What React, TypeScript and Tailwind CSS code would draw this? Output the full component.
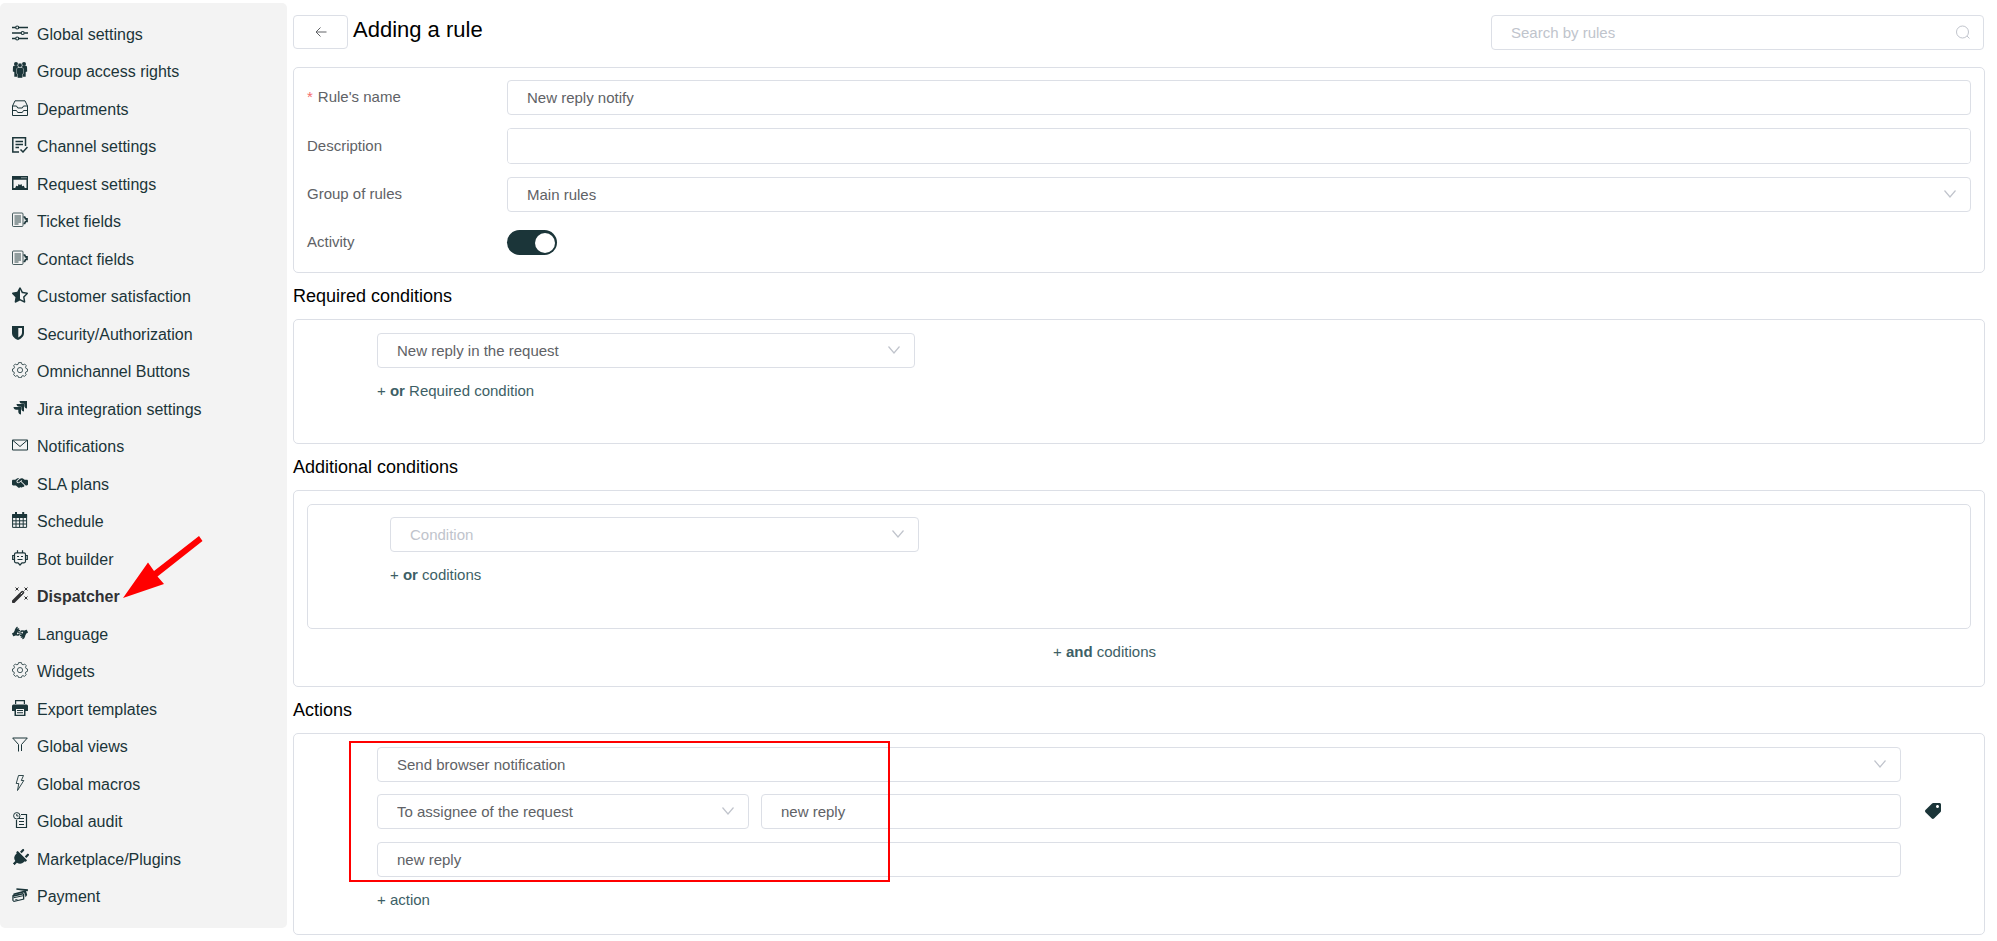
import { useState } from 'react';
import type { ReactNode } from 'react';
import { FaAmericanSignLanguageInterpreting, FaPlug, FaStarHalfAlt, FaTag } from 'react-icons/fa';
import { FaHandshakeSimple } from 'react-icons/fa6';

interface NavItem {
    label: string;
    icon: ReactNode;
}

interface SvgIconProps {
    children: ReactNode;
    filled?: boolean;
}

function SvgIcon({ children, filled = false }: SvgIconProps) {
    return (
        <svg
            viewBox="0 0 16 16"
            className="size-4"
            fill={filled ? 'currentColor' : 'none'}
            stroke={filled ? 'none' : 'currentColor'}
            strokeWidth="1"
            aria-hidden="true"
        >
            {children}
        </svg>
    );
}

const gearIcon = (
    <SvgIcon>
        <path d="M6.6.6h2.8l.5 1.7 1.2.5 1.6-.8 1.6 1.7-.8 1.5.5 1.3 1.5.5v2.3l-1.6.6-.5 1.2.8 1.6-1.7 1.7-1.5-.8-1.2.5-.5 1.6H6.700l-.6-1.6-1.2-.5-1.5.8-1.8-1.7.8-1.6-.5-1.2-1.4-.6V7l1.5-.5.5-1.3-.8-1.5L3.300 2l1.6.8 1.2-.5z" strokeWidth="0.8" />
        <circle cx="8" cy="8.1" r="2.6" strokeWidth="0.8" />
    </SvgIcon>
);

const fieldsIcon = (
    <SvgIcon>
        <rect x="0.5" y="1" width="10.5" height="13.5" rx="1" strokeWidth="0.8" />
        <path d="M2.5 4H9M2.5 6H9M2.5 8H9M2.5 10H9M2.5 12h4" strokeWidth="0.9" />
        <path d="M11.5 5h1.2l.8 1.800H15v2.700h-1.500l-.8 2h-1.200" strokeWidth="1.700" />
    </SvgIcon>
);

const navItems: NavItem[] = [
    {
        label: 'Global settings',
        icon: (
            <SvgIcon>
                <path d="M0 2.500h3.600M6.800 2.500H16M0 8h9.100M12.300 8H16M0 13.500h3.600M6.800 13.500H16" strokeWidth="1.300" />
                <circle cx="5.200" cy="2.500" r="1.500" strokeWidth="1.200" />
                <circle cx="10.700" cy="8" r="1.500" strokeWidth="1.200" />
                <circle cx="5.200" cy="13.500" r="1.500" strokeWidth="1.200" />
            </SvgIcon>
        ),
    },
    {
        label: 'Group access rights',
        icon: (
            <SvgIcon filled>
                <circle cx="4" cy="2" r="2" />
                <circle cx="12" cy="2" r="2" />
                <path d="M2 3.800h4v11H2.300V10L.8 9.500l.2-5zM14 3.800h-4v11h3.700V10l1.500-.5-.2-5z" />
                <circle cx="8" cy="3.300" r="2.200" stroke="#f3f3f3" strokeWidth="0.500" />
                <path d="M6 5.500h4l1.500 1.200v4.800l-1 .5V16h-5v-4l-1-.5V6.700z" stroke="#f3f3f3" strokeWidth="0.400" />
            </SvgIcon>
        ),
    },
    {
        label: 'Departments',
        icon: (
            <SvgIcon>
                <path d="M.5 6 3 .8h10L15.500 6v9.500H.5zM.5 6h4l1.200 2h4.600l1.200-2h4M.5 10.500h4l1.200 2h4.600l1.200-2h4" />
            </SvgIcon>
        ),
    },
    {
        label: 'Channel settings',
        icon: (
            <SvgIcon>
                <path d="M7 15H.8V.8h12.700V9M3.500 4.500h7.500M3.500 7.500h7.500M3.500 10.500H7M8.500 12.500 11 15l4.500-5" strokeWidth="1.500" />
            </SvgIcon>
        ),
    },
    {
        label: 'Request settings',
        icon: (
            <SvgIcon filled>
                <path fillRule="evenodd" d="M0 1h16v14H0zM1.500 4.800V13h1.700l1-2.200 1.700.4L6.500 9l1.500.9L9.500 9l.6 2.200 1.700-.4 1 2.200h1.700V4.800z" />
                <path d="M9.500 2.300h1v1h-1zM11.500 2.300h1v1h-1zM13.500 2.300h1v1h-1z" fill="#f3f3f3" />
            </SvgIcon>
        ),
    },
    { label: 'Ticket fields', icon: fieldsIcon },
    { label: 'Contact fields', icon: fieldsIcon },
    { label: 'Customer satisfaction', icon: <FaStarHalfAlt className="size-4" /> },
    {
        label: 'Security/Authorization',
        icon: (
            <SvgIcon filled>
                <path fillRule="evenodd" d="M0 1h12v7c0 3.500-3 5.800-6 7-3-1.200-6-3.500-6-7zM6.300 3v9.500c2-1.200 3.700-2.500 3.700-4.700V3z" />
            </SvgIcon>
        ),
    },
    { label: 'Omnichannel Buttons', icon: gearIcon },
    {
        label: 'Jira integration settings',
        icon: (
            <SvgIcon filled>
                <path d="M7.500 1H15v7.500c-1.500 0-2.700-1.200-2.700-2.700V3.700h-2C8.700 3.700 7.500 2.500 7.500 1z" />
                <path d="M4.500 4H12v7.500c-1.500 0-2.700-1.200-2.700-2.700V6.700h-2C5.700 6.700 4.500 5.500 4.500 4z" />
                <path d="M1.500 7H9v7.500c-1.500 0-2.700-1.200-2.700-2.700V9.700h-2C2.700 9.700 1.500 8.500 1.500 7z" />
            </SvgIcon>
        ),
    },
    {
        label: 'Notifications',
        icon: (
            <SvgIcon>
                <path d="M.5 3h15v10H.5zM.8 3.300 8 9.500l7.200-6.200" />
            </SvgIcon>
        ),
    },
    { label: 'SLA plans', icon: <FaHandshakeSimple className="size-4" /> },
    {
        label: 'Schedule',
        icon: (
            <SvgIcon>
                <path d="M.6 5.500h14M.6 8.800h14M.6 12h14M4 5v10M7.600 5v10M11.200 5v10M.6 3v12.400h14V3" />
                <path d="M.1 2h15v3.500H.1z" fill="currentColor" stroke="none" />
                <path d="M4 0v4M11.200 0v4" strokeWidth="2" />
            </SvgIcon>
        ),
    },
    {
        label: 'Bot builder',
        icon: (
            <SvgIcon>
                <path d="M4 2.800h8q1.500 0 1.500 1.500v7q0 1.500-1.500 1.500h-2L8 15l-2-2.200H4q-1.500 0-1.500-1.500v-7q0-1.500 1.500-1.500zM5.500 2.500V.3M10.500 2.500V.3M2.300 5.500H.7v4h1.600M13.700 5.500h1.600v4h-1.600M5 6.500h2M9 6.500h2M5.500 9.500h5" strokeWidth="1.200" />
            </SvgIcon>
        ),
    },
    {
        label: 'Dispatcher',
        icon: (
            <SvgIcon>
                <path d="M1.500 14.500 10.500 5.500" strokeWidth="3.400" strokeLinecap="round" />
                <path d="m8.800 7.200 1.700-1.700" stroke="#f3f3f3" />
                <path d="m3.500.5 3 3M6.500.5l-3 3M12.500.5l3 3M15.500.5l-3 3M12.500 9.500l3 3M15.500 9.500l-3 3" />
            </SvgIcon>
        ),
    },
    { label: 'Language', icon: <FaAmericanSignLanguageInterpreting className="size-4" /> },
    { label: 'Widgets', icon: gearIcon },
    {
        label: 'Export templates',
        icon: (
            <SvgIcon filled>
                <path fillRule="evenodd" d="M3 0h10v4H3zM4.200 1.200V4h7.600V1.200zM1.500 4.500h13Q16 4.500 16 6v5h-2.500v5h-11v-5H0V6q0-1.500 1.500-1.500zM4 9v5.700h8V9z" />
                <path d="M5 10h6v1H5zM5 12.300h6v1H5z" />
            </SvgIcon>
        ),
    },
    {
        label: 'Global views',
        icon: (
            <SvgIcon>
                <path d="M6.500 14.500v-7L.7 1h14.600L9.500 7.500V14" />
            </SvgIcon>
        ),
    },
    {
        label: 'Global macros',
        icon: (
            <SvgIcon>
                <path d="M6.500.5h5l-2.200 5h2.500l-6.300 10 1.300-7H4.200z" strokeWidth="0.9" />
            </SvgIcon>
        ),
    },
    {
        label: 'Global audit',
        icon: (
            <SvgIcon>
                <path d="M9 2.500h5.500v13H4.500V8M7 6.500h5M7 9.500h5M7 12.500h5" strokeWidth="1.200" />
                <circle cx="4.800" cy="3.800" r="3.200" />
                <path d="M4.800 2v2h1.700" />
            </SvgIcon>
        ),
    },
    { label: 'Marketplace/Plugins', icon: <FaPlug className="size-[18px] shrink-0 rotate-45" /> },
    {
        label: 'Payment',
        icon: (
            <SvgIcon filled>
                <path d="M4.500 1.200 16 2.200l-.2 2L4.300 2.800z" />
                <path d="m1.500 6.500 11-3 1.500.3 1.200 4.200-1.700 2.200-.6-3L12 5.500 1.200 8.300z" />
                <path fillRule="evenodd" d="M.3 8.300 10.800 6l1.500 1v5.500L1.800 15 .3 13.500zM1.500 9.800v3.700l.8.300 8.700-2.100V7.500z" />
                <path d="m1.500 10.300 9.500-2v1l-9.500 2zM3 12.500l2.500-.5v.8l-2.500.5z" />
            </SvgIcon>
        ),
    },
];

const controlClass =
    'block h-[35px] w-full rounded border border-[#dcdfe6] bg-white px-[19px] text-[15px] text-[#606266] outline-none placeholder:text-[#c0c4cc] focus:border-[#1b3539]';

interface SelectBoxProps {
    id?: string;
    label?: string;
    options: string[];
    placeholder?: string;
}

function SelectBox({ id, label, options, placeholder }: SelectBoxProps) {
    const [value, setValue] = useState(placeholder ? '' : options[0]);

    return (
        <div className="relative">
            <select
                id={id}
                aria-label={label}
                value={value}
                onChange={(e) => setValue(e.target.value)}
                className={`${controlClass} appearance-none pt-0.5 ${value === '' ? 'text-[#c0c4cc]' : ''}`}
            >
                {placeholder && <option value="">{placeholder}</option>}
                {options.map((option) => (
                    <option key={option} value={option}>
                        {option}
                    </option>
                ))}
            </select>
            <svg
                viewBox="0 0 14 8"
                className="pointer-events-none absolute top-[13px] right-[14px] h-2 w-[14px] text-[#c0c4cc]"
                fill="none"
                stroke="currentColor"
                strokeWidth="1.2"
                aria-hidden="true"
            >
                <path d="m1.500.5 5.500 6.500L12.500.5" />
            </svg>
        </div>
    );
}

function AddButton({ children }: { children: ReactNode }) {
    return (
        <button type="button" className="block cursor-pointer text-[15px] leading-[23px] text-[#3d5f66]">
            {children}
        </button>
    );
}

function Panel({ className = '', children }: { className?: string; children: ReactNode }) {
    return <div className={`rounded-[5px] border border-[#dcdfe6] ${className}`}>{children}</div>;
}

function SectionTitle({ children }: { children: ReactNode }) {
    return <h2 className="text-lg leading-[46px] text-black">{children}</h2>;
}

function Sidebar() {
    return (
        <nav className="mt-[3px] mb-[13px] flex w-[287px] shrink-0 rounded-[5px] bg-[#f3f3f3] pt-[13px] pb-3">
            <ul className="flex flex-1 flex-col">
                {navItems.map((item) => {
                    const active = item.label === 'Dispatcher';
                    return (
                        <li key={item.label} className="relative flex flex-1 items-center">
                            <a
                                href="#"
                                className={`flex items-center gap-[9px] pl-3 text-base leading-6 ${active ? 'font-bold text-[#303133]' : 'text-[#1b3539]'}`}
                            >
                                <span className="mb-1 flex size-4 items-center justify-center">{item.icon}</span>
                                {item.label}
                            </a>
                            {active && (
                                <svg
                                    viewBox="0 0 80 64"
                                    className="pointer-events-none absolute bottom-[17px] left-[123px] h-16 w-20"
                                    fill="#ff0000"
                                    aria-hidden="true"
                                >
                                    <path d="M0 63 25 27.500l6 8.500L76 1l3.500 5L34.500 41.500l6.500 7.500z" />
                                </svg>
                            )}
                        </li>
                    );
                })}
            </ul>
        </nav>
    );
}

export default function App() {
    const [ruleName, setRuleName] = useState('New reply notify');
    const [description, setDescription] = useState('');
    const [isActive, setIsActive] = useState(true);
    const [title, setTitle] = useState('new reply');
    const [message, setMessage] = useState('new reply');

    return (
        <div className="flex bg-white font-['Liberation_Sans',Arial,sans-serif]">
            <Sidebar />

            <main className="min-w-0 flex-1 pt-[15px] pr-3 pb-1.5 pl-1.5">
                {/* Header */}
                <header className="flex items-start justify-between">
                    <div className="flex items-start gap-[5px]">
                        <button
                            type="button"
                            aria-label="Back"
                            className="flex h-[34px] w-[55px] items-center justify-center rounded border border-[#dcdfe6] text-[#606266]"
                        >
                            <svg viewBox="0 0 12 12" className="size-3" fill="none" stroke="currentColor" aria-hidden="true">
                                <path d="M11.500 6H1M5.500 1.500 1 6l4.500 4.500" />
                            </svg>
                        </button>
                        <h1 className="text-[22px] leading-[30px] text-black">Adding a rule</h1>
                    </div>
                    <div className="relative w-[494px] pr-px">
                        <input type="search" aria-label="Search by rules" placeholder="Search by rules" className={controlClass} />
                        <svg
                            viewBox="0 0 14 14"
                            className="absolute top-[10px] right-[15px] size-[14px] text-[#c0c4cc]"
                            fill="none"
                            stroke="currentColor"
                            aria-hidden="true"
                        >
                            <circle cx="6.500" cy="7" r="6" />
                            <path d="m11 11 2.500 2.500" />
                        </svg>
                    </div>
                </header>

                {/* Rule details */}
                <Panel className="mt-[17px] flex flex-col gap-[13px] px-[13px] py-3">
                    <div className="flex items-center">
                        <label htmlFor="rule-name" className="w-[200px] shrink-0 text-[15px] text-[#606266]">
                            <span className="mr-[5px] text-[#f56c6c]">*</span>
                            Rule's name
                        </label>
                        <input
                            id="rule-name"
                            type="text"
                            required
                            value={ruleName}
                            onChange={(e) => setRuleName(e.target.value)}
                            className={controlClass}
                        />
                    </div>
                    <div className="flex h-9 items-center">
                        <label htmlFor="description" className="w-[200px] shrink-0 text-[15px] text-[#606266]">
                            Description
                        </label>
                        <textarea
                            id="description"
                            rows={1}
                            value={description}
                            onChange={(e) => setDescription(e.target.value)}
                            className="block h-9 w-full resize-none rounded border border-[#dcdfe6] bg-white px-[19px] py-1.5 text-[15px] text-[#606266] outline-none"
                        />
                    </div>
                    <div className="flex items-center">
                        <label htmlFor="group" className="w-[200px] shrink-0 text-[15px] text-[#606266]">
                            Group of rules
                        </label>
                        <div className="flex-1">
                            <SelectBox id="group" options={['Main rules']} />
                        </div>
                    </div>
                    <div className="flex h-[35px] items-center">
                        <label htmlFor="activity" className="w-[200px] shrink-0 text-[15px] text-[#606266]">
                            Activity
                        </label>
                        <input
                            id="activity"
                            type="checkbox"
                            role="switch"
                            checked={isActive}
                            onChange={(e) => setIsActive(e.target.checked)}
                            className="flex h-[25px] w-[50px] cursor-pointer appearance-none items-center rounded-full bg-[#dcdfe6] px-0.5 before:size-5 before:rounded-full before:bg-white checked:justify-end checked:bg-[#1b3539]"
                        />
                    </div>
                </Panel>

                <SectionTitle>Required conditions</SectionTitle>
                <Panel className="pt-[13px] pb-[41px] pl-[83px]">
                    <div className="w-[35%] pr-6">
                        <SelectBox label="Required condition" options={['New reply in the request']} />
                    </div>
                    <div className="mt-[11px]">
                        <AddButton>
                            + <b>or</b> Required condition
                        </AddButton>
                    </div>
                </Panel>

                <SectionTitle>Additional conditions</SectionTitle>
                <Panel className="px-[13px] pt-[13px] pb-[23px]">
                    <Panel className="pt-3 pb-[42px] pl-[82px]">
                        <div className="w-[35%] pr-6">
                            <SelectBox label="Additional condition" placeholder="Condition" options={['Status', 'Priority']} />
                        </div>
                        <div className="mt-[11px]">
                            <AddButton>
                                + <b>or</b> coditions
                            </AddButton>
                        </div>
                    </Panel>
                    <div className="mt-[11px] flex justify-center pr-[69px]">
                        <AddButton>
                            + <b>and</b> coditions
                        </AddButton>
                    </div>
                </Panel>

                <SectionTitle>Actions</SectionTitle>
                <Panel className="relative flex pt-[13px] pb-[23px] pl-[83px]">
                    <div className="flex-1">
                        <div className="grid grid-cols-4 gap-3">
                            <div className="col-span-4">
                                <SelectBox label="Action" options={['Send browser notification']} />
                            </div>
                            <SelectBox label="Recipient" options={['To assignee of the request']} />
                            <input
                                type="text"
                                aria-label="Notification title"
                                value={title}
                                onChange={(e) => setTitle(e.target.value)}
                                className={`${controlClass} col-span-3`}
                            />
                        </div>
                        <input
                            type="text"
                            aria-label="Notification text"
                            value={message}
                            onChange={(e) => setMessage(e.target.value)}
                            className={`${controlClass} mt-[13px]`}
                        />
                        <div className="mt-[11px]">
                            <AddButton>+ action</AddButton>
                        </div>
                    </div>
                    <div className="w-[83px] pt-[56px] pl-6">
                        <button type="button" aria-label="Insert tag" className="flex text-[#1b3539]">
                            <FaTag className="size-4 -scale-x-100" />
                        </button>
                    </div>
                    {/* Highlight frame */}
                    <div className="pointer-events-none absolute top-[7px] left-[55px] h-[141px] w-[541px] border-2 border-[#ff0000]" />
                </Panel>
            </main>
        </div>
    );
}
